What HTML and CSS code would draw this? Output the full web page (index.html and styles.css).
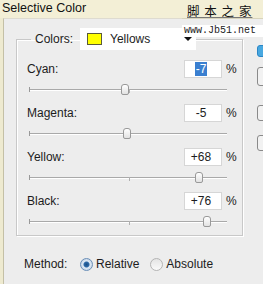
FILE: index.html
```html
<!DOCTYPE html>
<html lang="en">
<head>
    <meta charset="UTF-8">
    <title>Selective Color</title>
    <link rel="stylesheet" href="styles.css">
</head>
<body>
    <div class="title">Selective Color</div>
    <!-- watermark in the top right corner -->
    <div class="watermark">
        <div class="wm-cn">脚 本 之 家</div>
        <div class="wm-url">www.Jb51.net</div>
    </div>
    <div class="window">
        <div class="main">
            <fieldset class="group">
                <legend class="colors">
                    <span class="colors-label">Colors:</span>
                    <span class="select">
                        <span class="swatch"></span>
                        <span class="select-text">Yellows</span>
                        <span class="arrow"></span>
                    </span>
                </legend>
                <div class="channel">
                    <div class="channel-head">
                        <span class="name">Cyan:</span>
                        <span class="value"><span class="selected">-7</span></span>
                        <span class="pct">%</span>
                    </div>
                    <div class="slider"><span class="tick tick-mid"></span><span class="thumb" style="left: 92px"></span></div>
                </div>
                <div class="channel">
                    <div class="channel-head">
                        <span class="name">Magenta:</span>
                        <span class="value">-5</span>
                        <span class="pct">%</span>
                    </div>
                    <div class="slider"><span class="tick tick-mid"></span><span class="thumb" style="left: 94px"></span></div>
                </div>
                <div class="channel">
                    <div class="channel-head">
                        <span class="name">Yellow:</span>
                        <span class="value">+68</span>
                        <span class="pct">%</span>
                    </div>
                    <div class="slider"><span class="tick tick-mid"></span><span class="thumb" style="left: 166px"></span></div>
                </div>
                <div class="channel">
                    <div class="channel-head">
                        <span class="name">Black:</span>
                        <span class="value">+76</span>
                        <span class="pct">%</span>
                    </div>
                    <div class="slider"><span class="tick tick-mid"></span><span class="thumb" style="left: 174px"></span></div>
                </div>
            </fieldset>
            <div class="method">
                <span class="method-label">Method:</span>
                <span class="radio checked"></span>
                <span class="radio-text">Relative</span>
                <span class="radio"></span>
                <span class="radio-text">Absolute</span>
            </div>
        </div>
        <div class="side">
            <div class="btn btn-blue"></div>
            <div class="btn btn-2"></div>
            <div class="btn btn-3"></div>
            <div class="btn btn-4"></div>
        </div>
    </div>
</body>
</html>
```

FILE: styles.css
```css
body {
    margin: 0;
    width: 263px;
    height: 284px;
    overflow: hidden;
    position: relative;
    background-color: #eeead0;
    font-family: "Liberation Sans", Arial, sans-serif;
    font-size: 12px;
    color: #1c1c1c;
}
.title {
    height: 18px;
    line-height: 17px;
    padding-left: 2px;
    font-size: 12.5px;
    color: #111;
    background-color: #f3efd6;
}
/* watermark sits over the title bar */
.watermark {
    position: absolute;
    top: 0;
    left: 182px;
    width: 81px;
}
.wm-cn {
    height: 18px;
    padding-left: 5px;
    font-family: "Noto Sans CJK SC", sans-serif;
    font-size: 12.5px;
    letter-spacing: 1px;
    line-height: 22px;
    color: #111;
    text-decoration: underline;
    text-decoration-color: #777;
    border-bottom: 1px solid #d8d4bc;
}
.wm-url {
    margin-top: 6px;
    padding-left: 2px;
    height: 12px;
    line-height: 12px;
    background-color: #fff;
    font-family: "Liberation Mono", monospace;
    font-size: 10px;
    color: #222;
}
.window {
    display: flex;
    height: 265px;
    margin-left: 3px;
    border-left: 1px solid #c4c0a6;
    border-top: 1px solid #dedbd0;
    background-color: #ededed;
}
.main {
    width: 239px;
}
.group {
    box-sizing: border-box;
    width: 227px;
    margin: 9px 0 0 12px;
    padding: 10px 0 7px 10px;
    border: 1px solid #c8c8c8;
    box-shadow: inset 1px 1px 0 #fff, 1px 1px 0 #fff;
    min-inline-size: 0;
}
.colors {
    display: flex;
    align-items: center;
    height: 22px;
    padding: 0 0 0 4px;
    margin-left: 4px;
}
.colors-label {
    width: 45px;
}
.select {
    display: flex;
    align-items: center;
    width: 116px;
    height: 22px;
    background-color: #fff;
}
.swatch {
    width: 13px;
    height: 10px;
    margin-left: 7px;
    margin-right: 8px;
    border: 1px solid #5a5a3a;
    background-color: #ffff00;
}
.select-text {
    flex: 1;
}
.arrow {
    width: 0;
    height: 0;
    margin-right: 4px;
    border-left: 4px solid transparent;
    border-right: 4px solid transparent;
    border-top: 4px solid #111;
}
.channel {
    margin-bottom: 8px;
}
.channel:last-child {
    margin-bottom: 0;
}
.channel-head {
    display: flex;
    align-items: center;
    height: 18px;
}
.name {
    flex: 1;
}
.value {
    box-sizing: border-box;
    width: 38px;
    height: 18px;
    line-height: 16px;
    padding-right: 4px;
    text-align: center;
    background-color: #fff;
    border: 1px solid #d6d6d6;
}
.selected {
    display: inline-block;
    padding: 0 1px;
    line-height: 14px;
    background-color: #3a7fd0;
    color: #fff;
}
.pct {
    width: 16px;
    margin-left: 4px;
}
.slider {
    position: relative;
    height: 12px;
    width: 198px;
    margin: 6px 0 0 2px;
}
.slider::before {
    content: "";
    position: absolute;
    left: 0;
    right: 0;
    top: 5px;
    height: 1px;
    background-color: #a9a9a9;
    box-shadow: 0 1px 0 #fff;
}
.slider::after {
    content: "";
    position: absolute;
    left: 0;
    top: 3px;
    width: 1px;
    height: 5px;
    background-color: #999;
}
.tick-mid {
    position: absolute;
    left: 100px;
    top: 5px;
    width: 1px;
    height: 4px;
    background-color: #b0b0b0;
}
.thumb {
    position: absolute;
    top: 0;
    box-sizing: border-box;
    width: 8px;
    height: 11px;
    border: 1px solid #999;
    border-radius: 3px 3px 2px 2px;
    background: linear-gradient(#ffffff, #e2e2e2);
}
.method {
    display: flex;
    align-items: center;
    height: 16px;
    margin: 20px 0 0 20px;
}
.method-label {
    width: 56px;
}
.radio {
    box-sizing: border-box;
    width: 13px;
    height: 13px;
    margin-right: 3px;
    border-radius: 50%;
    border: 1px solid #b4b4b4;
    background: linear-gradient(#e4e4e4, #fafafa);
}
.radio.checked {
    border-color: #6a8fb8;
    background: radial-gradient(circle, #1a4f86 0, #2e6aa8 2.5px, #dfe9f4 3.5px, #c4d4e6 6px);
}
.radio-text {
    margin-right: 11px;
}
.side {
    position: relative;
    flex: 1;
}
.btn {
    position: absolute;
    left: 14px;
    width: 12px;
    border: 1px solid #8a8a8a;
    border-radius: 3px;
    background-color: #f2f2f2;
}
.btn-blue {
    top: 26px;
    height: 10px;
    border-color: #2b86c6;
    background-color: #48a8e0;
}
.btn-2 {
    top: 48px;
    height: 17px;
}
.btn-3 {
    top: 86px;
    height: 14px;
}
.btn-4 {
    top: 116px;
    height: 14px;
}
```
